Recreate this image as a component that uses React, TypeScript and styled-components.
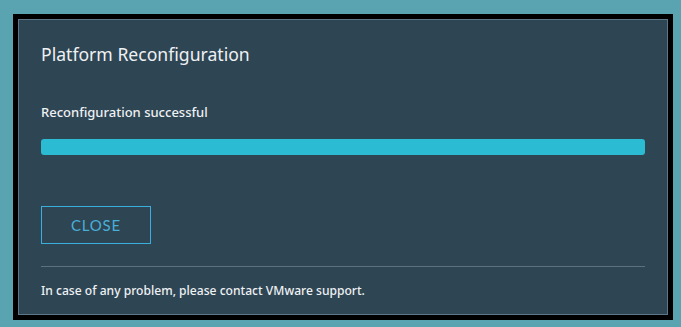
import React from "react"
import styled, { createGlobalStyle } from "styled-components"

const GlobalStyle = createGlobalStyle`
  html, body {
    margin: 0;
    padding: 0;
    background: #5aa3b1;
  }
  body {
    font-family: "Lato", "Noto Sans", sans-serif;
  }
`

export default function App() {
  return (
    <>
      <GlobalStyle />
      <StyledPage>
        <StyledFrame>
          <StyledPanel>
            <StyledTitle>Platform Reconfiguration</StyledTitle>
            <StyledStatus>Reconfiguration successful</StyledStatus>
            <StyledTrack>
              <StyledBar style={{ width: "100%" }} />
            </StyledTrack>
            <StyledActions>
              <StyledButton type="button">CLOSE</StyledButton>
            </StyledActions>
            <StyledDivider />
            <StyledNote>In case of any problem, please contact VMware support.</StyledNote>
          </StyledPanel>
        </StyledFrame>
      </StyledPage>
    </>
  )
}

const StyledPage = styled.div`
  padding: 14px 8px 7px 13px;
`

const StyledFrame = styled.div`
  width: 660px;
  box-sizing: border-box;
  background: #000;
  padding: 5px;
`

const StyledPanel = styled.div`
  box-sizing: border-box;
  height: 296px;
  background: #2e4553;
  border: 1px solid #5d7788;
  padding: 22px 22px 0 22px;
  display: flex;
  flex-direction: column;
  color: #eef1f3;
`

const StyledTitle = styled.h3`
  margin: 0;
  font-family: "Noto Sans", sans-serif;
  font-size: 17.6px;
  font-weight: 400;
  line-height: 24px;
`

const StyledStatus = styled.div`
  margin-top: 37px;
  font-family: "Noto Sans", sans-serif;
  font-size: 13px;
  font-weight: 500;
  line-height: 18px;
`

const StyledTrack = styled.div`
  margin-top: 18px;
  height: 16px;
  border-radius: 3px;
  overflow: hidden;
  background: #1e2f39;
`

const StyledBar = styled.div`
  height: 100%;
  background: #2bbcd3;
`

const StyledActions = styled.div`
  margin-top: 51px;
  display: flex;
`

const StyledButton = styled.button`
  width: 110px;
  height: 38px;
  box-sizing: border-box;
  background: transparent;
  border: 1px solid #3aaedc;
  color: #49afd9;
  font-family: "Lato", sans-serif;
  font-size: 15px;
  letter-spacing: 0.8px;
  padding: 0;
  cursor: pointer;
`

const StyledDivider = styled.hr`
  margin: 22px 0 0 0;
  border: none;
  height: 1px;
  background: #5d7180;
`

const StyledNote = styled.p`
  margin: 15px 0 0 0;
  font-family: "Noto Sans", sans-serif;
  font-size: 12.1px;
  font-weight: 500;
  line-height: 18px;
`
